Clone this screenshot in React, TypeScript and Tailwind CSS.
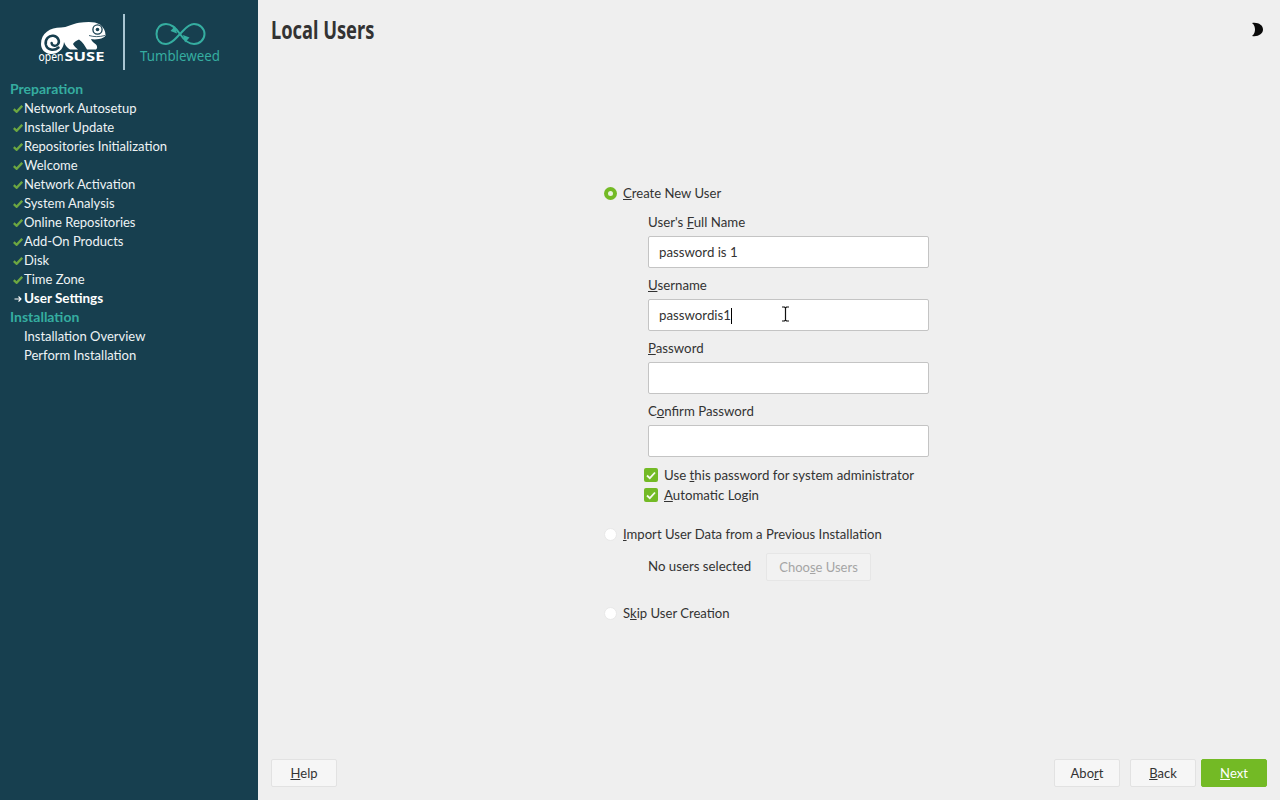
import React from "react";

const font = "font-['Lato','Noto_Sans',sans-serif]";

function Check() {
  return (
    <svg width="10" height="8" viewBox="0 0 10 8" className="shrink-0">
      <path d="M0.8 4.2 L3.6 6.8 L9.2 0.8" fill="none" stroke="#6da741" strokeWidth="2.3" />
    </svg>
  );
}

function Arrow() {
  return (
    <svg width="8" height="8" viewBox="0 0 8 8" className="shrink-0">
      <path d="M0.5 4H7M4.5 1.5L7 4L4.5 6.5" fill="none" stroke="#ffffff" strokeWidth="1.1" />
    </svg>
  );
}

function Logo() {
  return (
    <svg width="230" height="60" viewBox="0 0 230 60" className="block">
      <g transform="translate(-10,-12)">
        <path
          d="M41 44 C41 33 50 27.5 61 27.5 C67 27.5 72 24 79 22.8 C87 21.5 95 21.2 100 24.5 C103.5 27 105.5 31 105.5 35 C105.5 37 102 38.5 99 39 C96 39.5 93 39.5 91 39 C91.5 41 94 43 96 44.5 C97.5 46 97.5 48.5 96 49.5 L87 49.5 C85 46 83 42.5 79 39.5 C76 41 74 42 73 44 C74 46 76 48 78 49.5 L70 49.5 C67 47.5 65 45 64 42 C63.5 50 57 54.5 50.5 54 C45 53.5 41 49.5 41 44 Z"
          fill="#ffffff"
        />
        <path
          d="M58.5 47.5 C54 51.5 47 50 45.8 44.5 C44.8 39 49 35 53.5 35.8 C58.5 36.6 60.2 41.8 57.7 44.5 C55.5 46.8 51.8 45.7 51.6 43"
          fill="none"
          stroke="#173f4f"
          strokeWidth="2.5"
          strokeLinecap="round"
        />
        <circle cx="97.5" cy="29.5" r="4.6" fill="none" stroke="#173f4f" strokeWidth="1.3" />
        <circle cx="97.5" cy="29.5" r="1.8" fill="#173f4f" />
        <path d="M89 35.5 C94 37 99 37 105 35.5" fill="none" stroke="#173f4f" strokeWidth="0.8" />
        <text x="38.5" y="61" fill="#ffffff" fontFamily="'Noto Sans',sans-serif" fontSize="12" textLength="25" lengthAdjust="spacingAndGlyphs">open</text>
        <text x="64.5" y="61" fill="#ffffff" fontFamily="'Noto Sans',sans-serif" fontSize="12" fontWeight="700" textLength="40" lengthAdjust="spacingAndGlyphs">SUSE</text>
      </g>
      <rect x="113" y="2" width="2" height="56" fill="#a9c5d2" />
      <g transform="translate(-10,-12)">
        <path
          d="M180 34 C176 28 171 24 166 24 C160 24 156.5 28.5 156.5 34 C156.5 39.5 160 44 166 44 C172 44 176 38 180 34 C184 30 188 24 194 24 C200 24 204.5 28.5 204.5 34 C204.5 39.5 200 44 194 44 C189 44 184 40 180 34 Z"
          fill="none"
          stroke="#35ada0"
          strokeWidth="2"
        />
        <path d="M177 33.5 L170.5 31 L175 26 Z" fill="#35ada0" />
        <path d="M183 35 L189.5 37.5 L185 42.5 Z" fill="#35ada0" />
        <text x="140" y="61" fill="#35ada0" fontFamily="'Noto Sans',sans-serif" fontSize="13.5" textLength="80" lengthAdjust="spacingAndGlyphs">Tumbleweed</text>
      </g>
    </svg>
  );
}

const done = [
  "Network Autosetup",
  "Installer Update",
  "Repositories Initialization",
  "Welcome",
  "Network Activation",
  "System Analysis",
  "Online Repositories",
  "Add-On Products",
  "Disk",
  "Time Zone",
];

function StepRow({ icon, bold, children }: { icon?: React.ReactNode; bold?: boolean; children: React.ReactNode }) {
  return (
    <div className={`flex h-[19px] items-center pl-3 ${bold ? "text-[13.5px] font-bold text-white" : "text-[13px] text-[#eef3f5]"}`}>
      <span className="mr-px flex w-[11px] items-center justify-center">{icon}</span>
      <span className="whitespace-nowrap">{children}</span>
    </div>
  );
}

function Section({ children }: { children: React.ReactNode }) {
  return <div className="flex h-[19px] items-center pb-[3px] pl-2.5 text-[14px] font-bold text-[#35ada0]">{children}</div>;
}

function Field({ label, value, caret, cursor }: { label: React.ReactNode; value?: string; caret?: boolean; cursor?: boolean }) {
  return (
    <div className="w-[281px]">
      <div className="flex h-[22px] items-center pt-[2px] text-[13.25px] text-[#333333]">{label}</div>
      <div className="relative mt-[3px] flex h-[32px] items-center rounded-[2px] border border-[#c4c4c4] bg-white px-[10px] pt-[2px] text-[13.25px] text-[#333333]">
        <span>{value}</span>
        {caret && <span className="h-[16px] w-px bg-black" />}
        {cursor && (
          <svg width="9" height="16" viewBox="0 0 9 16" className="absolute left-[132px] top-[6px]">
            <path d="M1 1H3.5L4.5 2L5.5 1H8M4.5 2V14M1 15H3.5L4.5 14L5.5 15H8" fill="none" stroke="#111111" strokeWidth="1.2" />
          </svg>
        )}
      </div>
    </div>
  );
}

function Radio({ on, children }: { on?: boolean; children: React.ReactNode }) {
  return (
    <div className="flex h-[19px] items-center text-[13.1px] text-[#333333]">
      {on ? (
        <span className="flex h-[13px] w-[13px] items-center justify-center rounded-full bg-[#73ba25]">
          <span className="h-[5px] w-[5px] rounded-full bg-[#e9f3dd]" />
        </span>
      ) : (
        <span className="h-[13px] w-[13px] rounded-full border border-[#e8e8e8] bg-white" />
      )}
      <span className="ml-[6px]">{children}</span>
    </div>
  );
}

function CheckBox({ children }: { children: React.ReactNode }) {
  return (
    <div className="flex h-[20px] items-center text-[13.25px] text-[#333333]">
      <span className="flex h-[14px] w-[14px] items-center justify-center rounded-[2px] bg-[#73ba25]">
        <svg width="10" height="9" viewBox="0 0 10 9">
          <path d="M1 4.5L3.8 7.2L9 1.5" fill="none" stroke="#f4f9ec" strokeWidth="1.8" />
        </svg>
      </span>
      <span className="ml-[6px] pt-[2px]">{children}</span>
    </div>
  );
}

function Btn({ className, children }: { className?: string; children: React.ReactNode }) {
  return (
    <div className={`flex h-[28px] items-center justify-center rounded-[2px] border pt-[2px] text-[13px] ${className ?? "border-[#e2e2e2] bg-[#f6f6f6] text-[#333333]"}`}>
      {children}
    </div>
  );
}

export default function App() {
  return (
    <div className={`flex h-[800px] w-[1280px] overflow-hidden bg-[#efefef] ${font}`}>
      <aside className="w-[258px] shrink-0 bg-[#173f4f]">
        <div className="pl-[10px] pt-[12px]">
          <Logo />
        </div>
        <div className="mt-[8px]">
          <Section>Preparation</Section>
          {done.map((d) => (
            <StepRow key={d} icon={<Check />}>{d}</StepRow>
          ))}
          <StepRow icon={<Arrow />} bold>User Settings</StepRow>
          <Section>Installation</Section>
          <StepRow>Installation Overview</StepRow>
          <StepRow>Perform Installation</StepRow>
        </div>
      </aside>
      <main className="flex min-w-0 flex-1 flex-col">
        <header className="flex h-[60px] items-start justify-between pl-[13px] pr-[17px]">
          <h1 className="mt-[12px] origin-left scale-x-[0.73] whitespace-nowrap font-['Noto_Sans',sans-serif] text-[25px] font-bold leading-[34px] text-[#333333]">Local Users</h1>
          <svg width="12" height="15" viewBox="0 0 12 15" className="mt-[22px]">
            <path d="M1 1 C7 0 12 3 12 7.5 C12 12 7 15 1 14 C3.5 12 4 9.5 4 7.5 C4 5.5 3.5 3 1 1 Z" fill="#0a0a0a" />
          </svg>
        </header>
        <section className="flex-1 pl-[346px] pt-[124px]">
          <Radio on>
            <u>C</u>reate New User
          </Radio>
          <div className="ml-[44px] mt-[8px] flex flex-col gap-[6px]">
            <Field label={<span>User's <u>F</u>ull Name</span>} value="password is 1" />
            <Field label={<span><u>U</u>sername</span>} value="passwordis1" caret cursor />
            <Field label={<span><u>P</u>assword</span>} />
            <Field label={<span>C<u>o</u>nfirm Password</span>} />
          </div>
          <div className="ml-[40px] mt-[8px]">
            <CheckBox>Use <u>t</u>his password for system administrator</CheckBox>
            <CheckBox><u>A</u>utomatic Login</CheckBox>
          </div>
          <div className="mt-[20px]">
            <Radio>
              <u>I</u>mport User Data from a Previous Installation
            </Radio>
          </div>
          <div className="ml-[44px] mt-[9px] flex items-center text-[13.25px] text-[#333333]">
            <span className="w-[118px]">No users selected</span>
            <Btn className="w-[105px] border-[#e6e6e6] bg-[#f2f2f2] text-[#a5a5a5]">Choo<u>s</u>e Users</Btn>
          </div>
          <div className="mt-[23px]">
            <Radio>
              S<u>k</u>ip User Creation
            </Radio>
          </div>
        </section>
        <footer className="flex items-center justify-between pb-[13px] pl-[13px] pr-[13px]">
          <Btn className="w-[66px] border-[#e2e2e2] bg-[#f6f6f6] text-[#333333]"><u>H</u>elp</Btn>
          <div className="flex gap-[5px]">
            <Btn className="mr-[5px] w-[66px] border-[#e2e2e2] bg-[#f6f6f6] text-[#333333]">Abo<u>r</u>t</Btn>
            <Btn className="w-[66px] border-[#e2e2e2] bg-[#f6f6f6] text-[#333333]"><u>B</u>ack</Btn>
            <Btn className="w-[66px] border-[#73ba25] bg-[#73ba25] text-white"><u>N</u>ext</Btn>
          </div>
        </footer>
      </main>
    </div>
  );
}
